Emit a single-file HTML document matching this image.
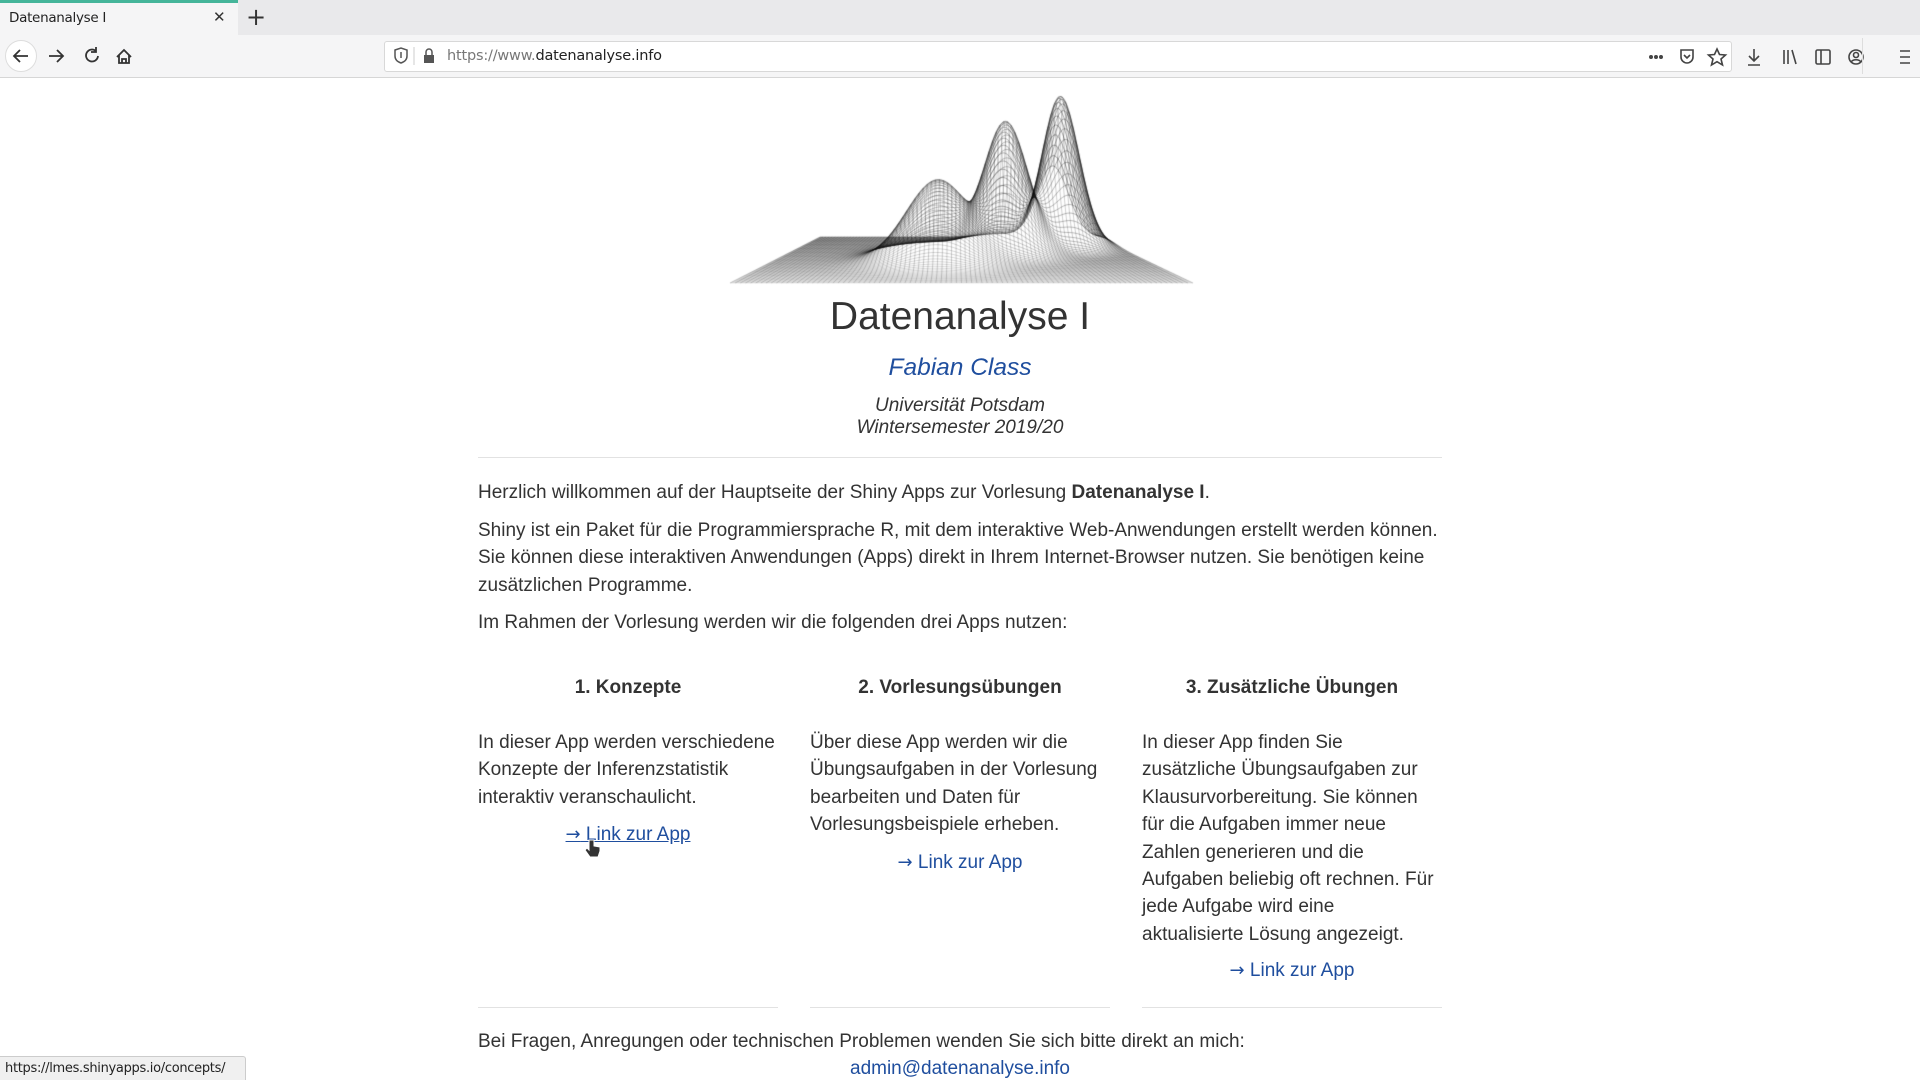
<!DOCTYPE html>
<html><head><meta charset="utf-8"><style>
*{margin:0;padding:0;box-sizing:border-box}
body{width:1920px;height:1080px;overflow:hidden;background:#fff;font-family:"Liberation Sans",Arial,sans-serif;color:#333;position:relative}
.a{position:absolute;white-space:nowrap}
.t{font-size:19px;line-height:27.4px}
.c{text-align:center}
a{color:#1f4e9e;text-decoration:none}
.ar{font-family:"DejaVu Sans",sans-serif;font-size:18px}
.hr{position:absolute;height:1px;background:#e2e2e2}
.ic{position:absolute}
</style></head><body>
<!-- tab bar -->
<div class="a" style="left:0;top:0;width:1920px;height:35px;background:#e9e9eb"></div>
<div class="a" style="left:0;top:0;width:238px;height:35px;background:#f5f5f6"></div>
<div class="a" style="left:0;top:0;width:238px;height:3px;background:#45b59a"></div>
<div class="a" style="left:9px;top:10px;font-family:'DejaVu Sans',sans-serif;font-size:13.5px;color:#222;letter-spacing:-0.3px">Datenanalyse I</div>
<div class="a" style="left:213px;top:8px;font-family:'DejaVu Sans',sans-serif;font-size:15px;color:#333">✕</div>
<div class="a" style="left:246px;top:3px;font-family:'DejaVu Sans',sans-serif;font-size:24px;color:#333">+</div>
<!-- nav bar -->
<div class="a" style="left:0;top:35px;width:1920px;height:43px;background:#f5f5f6;border-bottom:1px solid #d6d6d6"></div>
<div class="a" style="left:5px;top:40px;width:32px;height:32px;border-radius:50%;background:#fff;border:1px solid #ddd"></div>
<svg class="ic" style="left:0;top:35px" width="140" height="43" fill="none" stroke="#333" stroke-width="1.8">
<path d="M28 21H14M20 15l-6 6 6 6"/><path d="M49 21h14M57 15l6 6-6 6"/>
<path d="M96 16a6 6 0 1 0 2 5M96 12v5h-5"/>
<path d="M117 22l7-7 7 7M119 20v8h10v-8M122 28v-4h4v4"/>
</svg>
<div class="a" style="left:384px;top:41px;width:1348px;height:31px;background:#fff;border:1px solid #d8d8d8;border-radius:3px"></div>
<svg class="ic" style="left:390px;top:45px" width="50" height="22" fill="none" stroke="#555" stroke-width="1.5">
<path d="M5 5l6-2 6 2v6c0 4-3 6-6 7-3-1-6-3-6-7z"/><path d="M11 7v6"/>
<path d="M24 2v18" stroke="#ddd"/>
<rect x="34" y="10" width="10" height="8" fill="#555" stroke="none"/><path d="M36 10V7a3 3 0 0 1 6 0v3"/>
</svg>
<div class="a" style="left:447px;top:48px;font-family:'DejaVu Sans',sans-serif;font-size:14.5px;color:#777;letter-spacing:-0.2px">https://www.<span style="color:#222">datenanalyse.info</span></div>
<svg class="ic" style="left:1640px;top:44px" width="280" height="26" fill="none" stroke="#444" stroke-width="1.6">
<circle cx="11" cy="13" r="1.2" fill="#444"/><circle cx="16" cy="13" r="1.2" fill="#444"/><circle cx="21" cy="13" r="1.2" fill="#444"/>
<path d="M41 6h12v7a6 6 0 0 1-12 0z"/><path d="M44 11l3 3 3-3"/>
<path d="M77 5l2.5 5.5 6 .5-4.5 4 1.5 6-5.5-3.3-5.5 3.3 1.5-6-4.5-4 6-.5z"/>
<path d="M114 5v12M109 12l5 5 5-5M108 21h12"/>
<path d="M144 6v14M148 6v14M152 6l4 14"/>
<rect x="176" y="6" width="14" height="14" rx="1.5"/><path d="M181 6v14"/>
<circle cx="216" cy="13" r="7"/><circle cx="216" cy="11" r="2.5"/><path d="M211 18c2-3 8-3 10 0"/>
<path d="M260 7h10M260 13h10M260 19h10"/>
</svg>
<div class="a" style="left:1862px;top:38px;width:1px;height:36px;background:#ddd"></div>

<!-- logo -->
<canvas id="lg" width="480" height="215" style="position:absolute;left:720px;top:80px"></canvas>

<div class="a c" style="left:0;width:1920px;top:293px;font-size:39px;line-height:48px;color:#333">Datenanalyse I</div>
<div class="a c" style="left:0;width:1920px;top:353px;font-size:24.5px;line-height:30px;font-style:italic;color:#1f4e9e">Fabian Class</div>
<div class="a c" style="left:0;width:1920px;top:395px;font-size:19px;line-height:21.5px;font-style:italic;color:#333">Universität Potsdam<br>Wintersemester 2019/20</div>
<div class="hr" style="left:478px;width:964px;top:457px"></div>

<div class="a t" style="left:478px;top:479px">Herzlich willkommen auf der Hauptseite der Shiny Apps zur Vorlesung <b>Datenanalyse I</b>.</div>
<div class="a t" style="left:478px;top:517px">Shiny ist ein Paket für die Programmiersprache R, mit dem interaktive Web-Anwendungen erstellt werden können.<br>Sie können diese interaktiven Anwendungen (Apps) direkt in Ihrem Internet-Browser nutzen. Sie benötigen keine<br>zusätzlichen Programme.</div>
<div class="a t" style="left:478px;top:609px">Im Rahmen der Vorlesung werden wir die folgenden drei Apps nutzen:</div>

<div class="a t c" style="left:478px;width:300px;top:674px;font-weight:bold">1. Konzepte</div>
<div class="a t c" style="left:810px;width:300px;top:674px;font-weight:bold">2. Vorlesungsübungen</div>
<div class="a t c" style="left:1142px;width:300px;top:674px;font-weight:bold">3. Zusätzliche Übungen</div>

<div class="a t" style="left:478px;top:729px">In dieser App werden verschiedene<br>Konzepte der Inferenzstatistik<br>interaktiv veranschaulicht.</div>
<div class="a t c" style="left:478px;width:300px;top:821px"><a style="text-decoration:underline"><span class="ar">→</span> Link zur App</a></div>
<div class="a t" style="left:810px;top:729px">Über diese App werden wir die<br>Übungsaufgaben in der Vorlesung<br>bearbeiten und Daten für<br>Vorlesungsbeispiele erheben.</div>
<div class="a t c" style="left:810px;width:300px;top:849px"><a><span class="ar">→</span> Link zur App</a></div>
<div class="a t" style="left:1142px;top:729px">In dieser App finden Sie<br>zusätzliche Übungsaufgaben zur<br>Klausurvorbereitung. Sie können<br>für die Aufgaben immer neue<br>Zahlen generieren und die<br>Aufgaben beliebig oft rechnen. Für<br>jede Aufgabe wird eine<br>aktualisierte Lösung angezeigt.</div>
<div class="a t c" style="left:1142px;width:300px;top:957px"><a><span class="ar">→</span> Link zur App</a></div>

<div class="hr" style="left:478px;width:300px;top:1007px"></div>
<div class="hr" style="left:810px;width:300px;top:1007px"></div>
<div class="hr" style="left:1142px;width:300px;top:1007px"></div>

<div class="a t" style="left:478px;top:1028px">Bei Fragen, Anregungen oder technischen Problemen wenden Sie sich bitte direkt an mich:</div>
<div class="a t c" style="left:0;width:1920px;top:1055px"><a>admin@datenanalyse.info</a></div>

<svg class="ic" style="left:584px;top:838px" width="18" height="22"><path d="M5 2v10l-2-2-2 2 5 7h8l2-6v-4l-6-1V2z" fill="#333" stroke="#fff" stroke-width="1"/></svg>

<div class="a" style="left:0;top:1056px;width:246px;height:24px;background:#f0f0f0;border:1px solid #ccc;border-left:none;border-bottom:none;border-radius:0 3px 0 0"></div>
<div class="a" style="left:5px;top:1061px;font-family:'DejaVu Sans',sans-serif;font-size:13px;color:#222;letter-spacing:-0.3px">https://lmes.shinyapps.io/concepts/</div>

<script>
(function(){
var c=document.getElementById('lg').getContext('2d');
function g(u,v,cu,cv,su,sv){var a=(u-cu)/su,b=(v-cv)/sv;return Math.exp(-0.5*(a*a+b*b));}
function P(u,v){var fx=730+463*u,bx=820+277*u,x=fx+(bx-fx)*v,y=283-46*v;
var z=80*g(u,v,0.44,0.5,0.085,0.13)+128*g(u,v,0.64,0.7,0.065,0.11)+146*g(u,v,0.84,0.88,0.057,0.1);
return [x-720,y-z-80];}
c.lineWidth=0.5;
var N=80,M=180,i,j,p;
for(i=0;i<=N;i++){var v=i/N;c.strokeStyle='rgba(0,0,0,'+(0.2+0.5*v)+')';c.beginPath();
for(j=0;j<=M;j++){p=P(j/M,v);j?c.lineTo(p[0],p[1]):c.moveTo(p[0],p[1]);}c.stroke();}
for(j=0;j<=90;j++){var u=j/90;c.strokeStyle='rgba(0,0,0,0.4)';c.beginPath();
for(i=0;i<=M;i++){p=P(u,i/M);i?c.lineTo(p[0],p[1]):c.moveTo(p[0],p[1]);}c.stroke();}
})();
</script>
</body></html>
